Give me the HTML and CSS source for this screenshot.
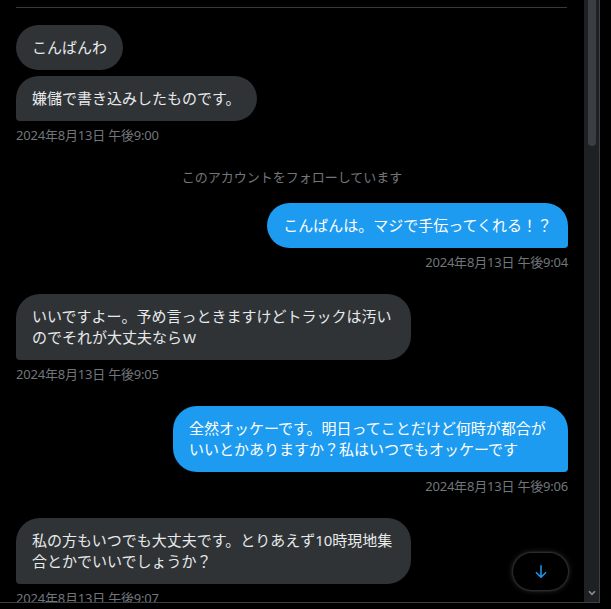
FILE: index.html
```html
<!DOCTYPE html>
<html lang="ja">
<head>
<meta charset="utf-8">
<title>DM</title>
<link rel="stylesheet" href="styles.css">
</head>
<body>
<div class="pane">
  <div class="feed">
    <div class="divider"></div>

    <div class="group in">
      <div class="bubble">こんばんわ</div>
      <div class="bubble last">嫌儲で書き込みしたものです。</div>
      <div class="time">2024年8月13日 午後9:00</div>
    </div>

    <div class="notice">このアカウントをフォローしています</div>

    <div class="group out">
      <div class="bubble last">こんばんは。マジで手伝ってくれる！？</div>
      <div class="time">2024年8月13日 午後9:04</div>
    </div>

    <div class="group in">
      <div class="bubble last">いいですよー。予め言っときますけどトラックは汚いのでそれが大丈夫ならｗ</div>
      <div class="time">2024年8月13日 午後9:05</div>
    </div>

    <div class="group out">
      <div class="bubble last">全然オッケーです。明日ってことだけど何時が都合がいいとかありますか？私はいつでもオッケーです</div>
      <div class="time">2024年8月13日 午後9:06</div>
    </div>

    <div class="group in">
      <div class="bubble last">私の方もいつでも大丈夫です。とりあえず10時現地集合とかでいいでしょうか？</div>
      <div class="time">2024年8月13日 午後9:07</div>
    </div>

    <button class="jump" aria-label="下へ移動">
      <svg viewBox="0 0 24 24" width="18" height="18"><path d="M13 3v13.59l5.043-5.05 1.414 1.42L12 20.41l-7.457-7.45 1.414-1.42L11 16.59V3h2z"/></svg>
    </button>
  </div>
  <div class="scrollbar">
    <div class="thumb"></div>
    <svg class="chev" viewBox="0 0 8 6" width="8" height="6"><path d="M1 1.2 L4 4.4 L7 1.2" fill="none" stroke="#8b8d90" stroke-width="1.6"/></svg>
  </div>
</div>
</body>
</html>
```

FILE: styles.css
```css
html, body {
  margin: 0;
  padding: 0;
  background: #000;
}
body {
  width: 611px;
  height: 609px;
  overflow: hidden;
  font-family: "Noto Sans", "Noto Sans CJK JP", sans-serif;
  color: #e7e9ea;
}
.pane {
  display: flex;
  width: 600px;
  height: 603px;
  box-sizing: border-box;
  border-right: 1px solid #3e4144;
  border-bottom: 1px solid #3e4144;
  overflow: hidden;
}
.feed {
  position: relative;
  width: 584px;
  flex: none;
  box-sizing: border-box;
  padding: 7px 16px 0 16px;
  display: flex;
  flex-direction: column;
}
.divider {
  flex: none;
  height: 0;
  border-top: 1px solid #36393c;
  margin-right: 1px;
  margin-bottom: 17px;
}
.group {
  display: flex;
  flex-direction: column;
  gap: 6px;
  padding-bottom: 24px;
}
.group.in { align-items: flex-start; }
.group.out { align-items: flex-end; }
.bubble {
  max-width: 395px;
  box-sizing: border-box;
  padding: 12px 16px;
  font-size: 15px;
  line-height: 21px;
  border-radius: 24px;
  background: #2f3336;
  color: #e7e9ea;
}
.group.in .bubble.last { border-bottom-left-radius: 4px; }
.group.out .bubble {
  background: #1d9bf0;
  color: #fff;
}
.group.out .bubble.last { border-bottom-right-radius: 4px; }
.time {
  font-size: 13px;
  line-height: 16px;
  color: #71767b;
  white-space: nowrap;
  letter-spacing: -0.2px;
}
.notice {
  font-size: 13px;
  line-height: 20px;
  color: #71767b;
  text-align: center;
  margin-bottom: 16px;
}
.jump {
  position: absolute;
  right: 16px;
  top: 553px;
  width: 55px;
  height: 37px;
  border: none;
  border-radius: 999px;
  background: #000;
  box-shadow: 0 0 6px rgba(255,255,255,0.22), 0 0 2px 1px rgba(255,255,255,0.12);
  display: flex;
  align-items: center;
  justify-content: center;
  padding: 0;
}
.jump svg { fill: #1d9bf0; }
.scrollbar {
  position: relative;
  width: 15px;
  flex: none;
  background: #1f2023;
  display: flex;
  flex-direction: column;
  align-items: center;
}
.thumb {
  width: 8px;
  height: 146px;
  background: #3b3e42;
  border-radius: 0 0 4px 4px;
}
.chev {
  position: absolute;
  bottom: 6px;
  left: 4px;
}
```
